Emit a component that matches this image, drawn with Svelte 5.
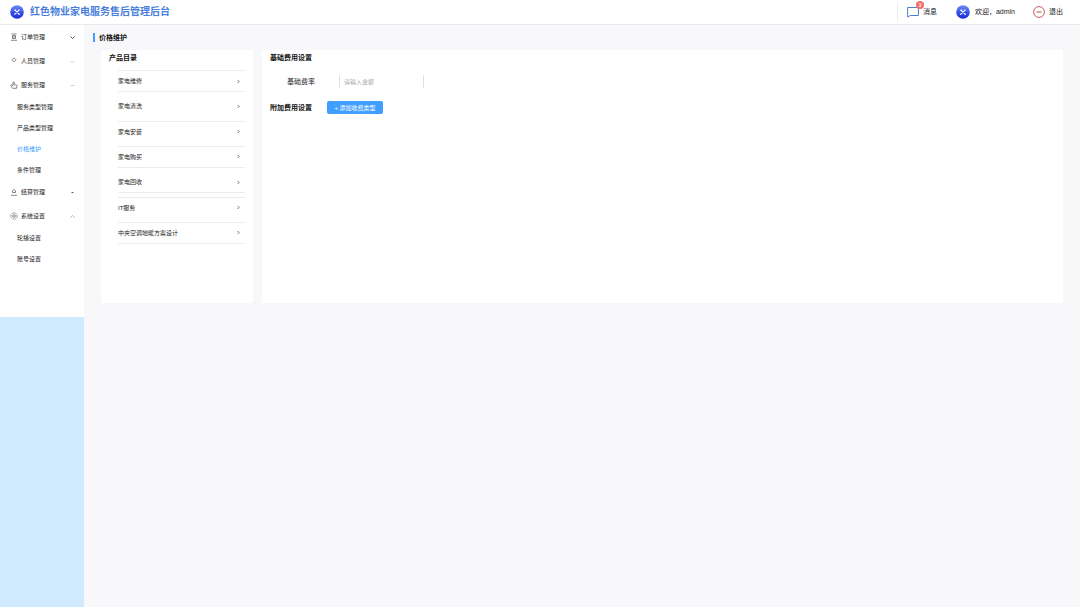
<script>
  const menu = [
    { label: '订单管理', icon: 'doc', arrow: 'down', tone: 'dark', children: [] },
    { label: '人员管理', icon: 'pin', arrow: 'down', tone: 'light', children: [] },
    { label: '服务管理', icon: 'hand', arrow: 'up', tone: 'flat', children: ['服务类型管理', '产品类型管理', '价格维护', '条件管理'] },
    { label: '结算管理', icon: 'bell', arrow: 'down', tone: 'dot', children: [] },
    { label: '系统设置', icon: 'gear', arrow: 'up', tone: 'mid', children: ['轮播设置', '账号设置'] }
  ];
  const active = '价格维护';
  const products = [
    { name: '家电维修', line: 'both' },
    { name: '家电清洗', line: 'none' },
    { name: '家电安装', line: 'top' },
    { name: '家电购买', line: 'both' },
    { name: '家电回收', line: 'bottom' },
    { name: 'IT服务', line: 'top' },
    { name: '中央空调地暖方案设计', line: 'both' }
  ];
  const arrows = {
    dark: 'M1.5 2.5l2 2 2-2',
    light: 'M1.5 3l2 2 2-2',
    flat: 'M1.5 3.5h4',
    dot: 'M2.5 3.5h2',
    mid: 'M1.5 4.5l2-2 2 2'
  };
  let amount = $state('');
</script>

{#snippet logo()}
  <svg class="logo" viewBox="0 0 14 14" aria-hidden="true">
    <defs>
      <linearGradient id="ball" x1="0" y1="0" x2="0" y2="1">
        <stop offset="0" stop-color="#6c8cf5" />
        <stop offset="0.55" stop-color="#3550e4" />
        <stop offset="1" stop-color="#1f2bd4" />
      </linearGradient>
    </defs>
    <circle cx="7" cy="7" r="6.8" />
    <path d="M5 5.2l4.4 4.3M9 5.2L4.6 9.4" stroke="#fff" stroke-width="1.1" stroke-linecap="round" />
    <path d="M4.2 5.9l1.7-1.7M8.6 4.2l1.3 1.3" stroke="#dfe6ff" stroke-width=".8" />
  </svg>
{/snippet}

<div class="page">
  <header>
    <h1>{@render logo()}<span>红色物业家电服务售后管理后台</span></h1>
    <div class="tools">
      <button class="message">
        <span class="bubble">
          <svg viewBox="0 0 12 12" aria-hidden="true"><path d="M.6 1.5h10.8v8H3.2L.6 11z" stroke="#4d7fd0" /></svg>
          <b>3</b>
        </span>
        消息
      </button>
      <div class="user">{@render logo()}<span>欢迎，admin</span></div>
      <button class="exit">
        <svg viewBox="0 0 12 12" aria-hidden="true"><circle cx="6" cy="6" r="5.4" stroke="#c04848" stroke-width=".9" /><path d="M3.5 6h5" stroke="#c04848" /></svg>
        退出
      </button>
    </div>
  </header>

  <div class="body">
    <aside>
      <nav>
        {#each menu as group}
          <button class="group">
            <svg class="icon" viewBox="0 0 8 8" aria-hidden="true">
              {#if group.icon === 'doc'}
                <path d="M1.5 1h5M2.5 2.5h3v3h-3zM2.5 4h3M1 7.3h6" />
              {:else if group.icon === 'pin'}
                <path d="M4 .8L6 2.8 4 4.8 2 2.8z" />
              {:else if group.icon === 'hand'}
                <path d="M3 4.6V1.2h1.2v2.3l2.9.8-.6 3H2.6L.7 4.4l1.2-.6L3 4.9" />
              {:else if group.icon === 'bell'}
                <path d="M2.5 4.5V3L4 1.3 5.5 3v1.5zM1 7.3h6" />
              {:else}
                <circle cx="4" cy="4" r="3.2" stroke-dasharray="1.6 .7" /><circle cx="4" cy="4" r="1.3" />
              {/if}
            </svg>
            <span>{group.label}</span>
            <svg class="arrow {group.tone}" viewBox="0 0 7 7" aria-hidden="true"><path d={arrows[group.tone]} /></svg>
          </button>
          {#if group.children.length}
            <ul>
              {#each group.children as child}
                <li><a href="#top" class:active={child === active}>{child}</a></li>
              {/each}
            </ul>
          {/if}
        {/each}
      </nav>
    </aside>

    <main>
      <h2>价格维护</h2>
      <div class="panels">
        <section class="catalog">
          <h3>产品目录</h3>
          <div class="list">
            {#each products as product}
              <button class="item {product.line}">
                <span>{product.name}</span>
                <svg viewBox="0 0 5 5" aria-hidden="true"><path d="M1.7 1l1.5 1.5L1.7 4" /></svg>
              </button>
            {/each}
          </div>
        </section>

        <section class="fees">
          <h3>基础费用设置</h3>
          <div class="field">
            <label for="amount">基础费率</label>
            <input id="amount" placeholder="请输入金额" bind:value={amount} />
          </div>
          <div class="extra">
            <h3>附加费用设置</h3>
            <button class="add">+ 添加收费类型</button>
          </div>
        </section>
      </div>
    </main>
  </div>
</div>

<style>
  :global(body) { margin: 0; }
  .page {
    display: flex;
    flex-direction: column;
    min-height: 100vh;
    background: #f8f8fb;
    color: #222;
    font-family: "Liberation Sans", "Noto Sans CJK SC", sans-serif;
    font-size: 6px;
    line-height: 10px;
  }
  .page * { box-sizing: border-box; }
  button, input { font: inherit; color: inherit; border: 0; background: none; padding: 0; margin: 0; }
  h1, h2, h3, ul { margin: 0; padding: 0; }
  ul { list-style: none; }
  svg { display: block; flex: none; }
  path, circle { fill: none; }
  header {
    display: flex;
    justify-content: space-between;
    height: 25px;
    padding: 0 17px 0 10px;
    background: #fff;
    border-bottom: 1px solid #e9e9ec;
  }
  h1 {
    display: flex;
    align-items: center;
    gap: 6px;
    font-size: 10px;
    line-height: 14px;
    font-weight: 700;
    color: #4a7fdc;
    white-space: nowrap;
  }
  .logo { width: 14px; height: 14px; }
  .logo circle { fill: url(#ball); }
  .tools { display: flex; align-items: center; font-size: 7px; color: #222; white-space: nowrap; }
  .tools > * { display: flex; align-items: center; }
  .message { height: 18px; gap: 4px; padding-left: 9px; border-left: 1px solid #ececec; }
  .bubble { position: relative; }
  .bubble svg, .exit svg { width: 12px; height: 12px; }
  .bubble b {
    position: absolute;
    top: -5px;
    right: -5px;
    width: 8px;
    height: 8px;
    border-radius: 4px;
    background: #f56c6c;
    color: #fff;
    font-size: 6px;
    line-height: 8px;
    font-weight: 400;
    text-align: center;
  }
  .user { gap: 5px; margin-left: 19px; }
  .exit { gap: 4px; margin-left: 18px; }
  .body { display: flex; flex: 1; }
  aside { width: 84px; flex: none; background: #d0eaff; }
  nav { min-height: 292px; background: #fff; }
  .group { display: flex; align-items: center; width: 100%; height: 24px; padding: 0 8px 0 10px; text-align: left; }
  .group span { flex: 1; padding-left: 3px; }
  .icon { width: 8px; height: 8px; }
  .icon path, .icon circle { stroke: #555; stroke-width: .7; }
  .arrow { width: 7px; height: 7px; }
  .arrow path { stroke: #444; stroke-width: .9; }
  .arrow.light path, .arrow.flat path { stroke: #ccc; }
  .arrow.mid path { stroke: #aaa; }
  ul { margin-top: -1px; }
  li a { display: flex; align-items: center; height: 21px; padding-left: 17px; color: #222; text-decoration: none; }
  li a.active { color: #409eff; }
  main { flex: 1; min-width: 0; padding: 8px 17px 0 9px; }
  h2 { padding-left: 4px; border-left: 2px solid #409eff; font-size: 7px; line-height: 9px; color: #111; }
  .panels { display: flex; gap: 9px; min-height: 253px; margin: 8px 0 0 8px; }
  section { background: #fff; }
  h3 { font-size: 7px; line-height: 10px; color: #111; white-space: nowrap; }
  .catalog { width: 152px; flex: none; padding: 3px 8px; }
  .list { display: flex; flex-direction: column; justify-content: space-between; height: 174px; margin: 7px 0 0 9px; }
  .item {
    display: flex;
    align-items: center;
    justify-content: space-between;
    height: 22px;
    padding-right: 4px;
    border: solid transparent;
    border-width: 1px 0;
  }
  .item svg { width: 5px; height: 5px; }
  .item path { stroke: #555; stroke-width: .8; }
  .both, .top { border-top-color: #ebebf0; }
  .both, .bottom { border-bottom-color: #ebebf0; }
  .fees { flex: 1; padding: 3px 8px; }
  .field { display: flex; align-items: center; margin: 12px 0 0 17px; font-size: 7px; }
  label { width: 52px; }
  input {
    width: 85px;
    height: 13px;
    padding: 0 4px;
    border: solid #dcdfe6;
    border-width: 0 1px;
    border-radius: 1px;
    font-size: 6px;
  }
  input::placeholder { color: #aaa; opacity: 1; }
  .extra { display: flex; align-items: center; gap: 15px; margin-top: 13px; }
  .add { width: 56px; height: 13px; border-radius: 2px; background: #409eff; color: #fff; }
</style>
